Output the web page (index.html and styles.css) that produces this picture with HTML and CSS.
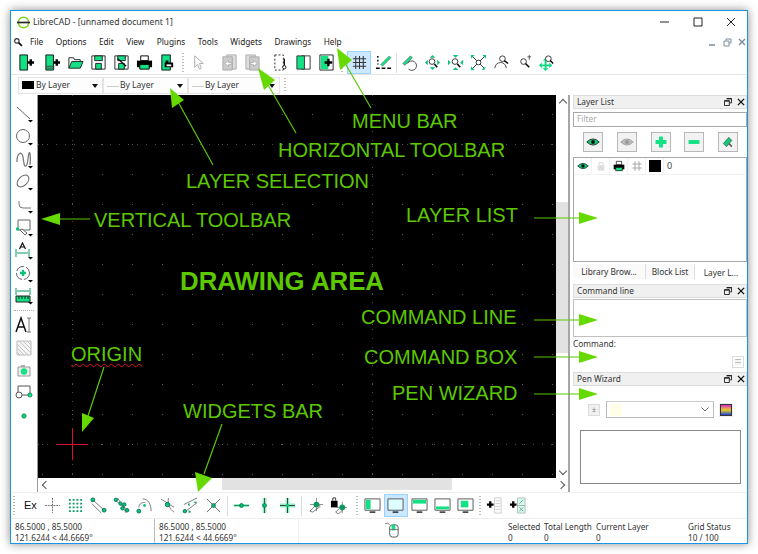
FILE: index.html
```html
<!DOCTYPE html>
<html lang="en">
<head>
  <meta charset="UTF-8" />
  <title>LibreCAD layout</title>
  <link rel="stylesheet" href="styles.css">
</head>
<body>
  <svg class="defs" width="0" height="0">
    <symbol id="i-new" viewBox="0 0 18 18"><path d="M2 1h8v16H2z" fill="#12e184" stroke="#111"/><path d="M10 9h7M13.500 5.500v7" stroke="#000" stroke-width="2.500"/></symbol>
    <symbol id="i-tpl" viewBox="0 0 18 18"><path d="M2 1h8v16H2z" fill="#12e184" stroke="#111"/><path d="M2 13h9M2 15h9" stroke="#444"/><path d="M10 9h7M13.500 5.500v7" stroke="#000" stroke-width="2.500"/></symbol>
    <symbol id="i-open" viewBox="0 0 18 18"><path d="M2 15V4h5l1 2h6v2" fill="#fff" stroke="#222"/><path d="M2 15l3-7h12l-3 7z" fill="#12e184" stroke="#222"/></symbol>
    <symbol id="i-save" viewBox="0 0 18 18"><path d="M2 2h14v14H2z" fill="#fff" stroke="#222"/><path d="M5 2h8v5H5z" fill="#12e184" stroke="#222"/><path d="M6 10h6v6H6z" fill="#12e184" stroke="#222"/></symbol>
    <symbol id="i-saveas" viewBox="0 0 18 18"><path d="M2 2h14v14H2z" fill="#fff" stroke="#222"/><path d="M5 2h8v5H5zM6 10h6v6H6z" fill="#12e184" stroke="#222"/><path d="M5 5l9 8" stroke="#111" stroke-width="1.500"/></symbol>
    <symbol id="i-print" viewBox="0 0 18 18"><path d="M5 2h8v5H5z" fill="#fff" stroke="#000"/><path d="M1 7h16v7H1z" fill="#000"/><path d="M4 11h10v5H4z" fill="#12e184" stroke="#000"/></symbol>
    <symbol id="i-preview" viewBox="0 0 18 18"><path d="M3 1h9v16H3z" fill="#12e184" stroke="#111"/><path d="M7 7h3v2h5v5H6V9h1z" fill="#000"/><path d="M8 11h5v2H8z" fill="#fff"/></symbol>
    <symbol id="i-cursor" viewBox="0 0 18 18"><path d="M5 2v12l3-3 2 5 2-1-2-5h4z" fill="#fff" stroke="#aaa"/></symbol>
    <symbol id="i-undo" viewBox="0 0 18 18"><path d="M6 1h10v15H6z" fill="#ddd" stroke="#aaa"/><path d="M2 3h10v14H2z" fill="#ccc" stroke="#aaa"/><path d="M4 10l4-3v2h3v2H8v2z" fill="#fff" stroke="#999" stroke-width=".6"/></symbol>
    <symbol id="i-redo" viewBox="0 0 18 18"><path d="M2 1h10v15H2z" fill="#ddd" stroke="#aaa"/><path d="M6 3h10v14H6z" fill="#ccc" stroke="#aaa"/><path d="M14 10l-4-3v2H7v2h3v2z" fill="#fff" stroke="#999" stroke-width=".6"/></symbol>
    <symbol id="i-cut" viewBox="0 0 18 18"><path d="M3 1h9v16H3z" fill="#fff" stroke="#222" stroke-dasharray="2 2"/><circle cx="13" cy="14" r="1.800" fill="#fff" stroke="#111"/><path d="M13 5v7" stroke="#111" stroke-width="1.500"/></symbol>
    <symbol id="i-copy" viewBox="0 0 18 18"><path d="M7 2h9v14H7z" fill="#fff" stroke="#333"/><path d="M2 2h8v14H2z" fill="#12e184" stroke="#333"/></symbol>
    <symbol id="i-paste" viewBox="0 0 18 18"><path d="M2 1h14v16H2z" fill="#fff" stroke="#222"/><path d="M3 2h8v14H3z" fill="#12e184"/><path d="M7 9h8M11 5v8" stroke="#000" stroke-width="2.500"/></symbol>
    <symbol id="i-grid" viewBox="0 0 18 18"><path d="M5 2v14M9 2v14M13 2v14M2 5h14M2 9h14M2 13h14" stroke="#333" stroke-width="1.100"/></symbol>
    <symbol id="i-draft" viewBox="0 0 18 18"><path d="M3 2v9" stroke="#000" stroke-dasharray="2 2" stroke-width="1.500"/><path d="M6 11L15 2l2 2-9 9z" fill="#12e184" stroke="#777" stroke-width=".6"/><path d="M1 15h4M7 15h4M13 15h4" stroke="#000" stroke-width="1.500"/></symbol>
    <symbol id="i-redraw" viewBox="0 0 18 18"><path d="M2 10L10 2l2 2-8 8z" fill="#12e184" stroke="#555" stroke-width=".7"/><path d="M7 10a5 5 0 1 1 1 6" fill="none" stroke="#444"/></symbol>
    <symbol id="i-zin" viewBox="0 0 18 18"><path d="M9 1l3 3H6zM9 17l-3-3h6zM1 9l3-3v6zM17 9l-3 3V6z" fill="#0cc478"/><circle cx="8.500" cy="8" r="3" fill="#fff" stroke="#333"/><path d="M11 10.500l3 3.500" stroke="#000" stroke-width="1.600"/></symbol>
    <symbol id="i-zout" viewBox="0 0 18 18"><path d="M9 4L6 1h6zM9 14l3 3H6zM4 9L1 12V6zM14 9l3-3v6z" fill="#0cc478"/><circle cx="8.500" cy="8" r="3" fill="#fff" stroke="#333"/><path d="M11 10.500l3 3.500" stroke="#000" stroke-width="1.600"/></symbol>
    <symbol id="i-zauto" viewBox="0 0 18 18"><path d="M1 1h4L1 5zM17 1v4l-4-4zM1 17v-4l4 4z" fill="#0cc478"/><path d="M15 17h-3l5-4z" fill="#0cc478"/><path d="M3 3l12 12M15 3L3 15" stroke="#333"/><circle cx="9" cy="9" r="2.500" fill="#fff" stroke="#333"/></symbol>
    <symbol id="i-zprev" viewBox="0 0 18 18"><path d="M2 15a6 6 0 0 1 12 0" fill="none" stroke="#444"/><circle cx="10" cy="5" r="3" fill="#fff" stroke="#333"/><path d="M12 7l4 3" stroke="#000" stroke-width="1.500"/></symbol>
    <symbol id="i-zwin" viewBox="0 0 18 18"><circle cx="8" cy="8" r="3" fill="#fff" stroke="#333"/><path d="M10 10l4 4" stroke="#000" stroke-width="1.600"/><path d="M14 1v5M12 3h4" stroke="#555"/></symbol>
    <symbol id="i-zpan" viewBox="0 0 18 18"><path d="M1 12l3-3v2h3V7H5l3-3 3 3H9v4h3V9l3 3-3 3v-2H9v2h2l-3 3-3-3h2v-2H4v2z" fill="#0cd880"/><circle cx="11" cy="5" r="3" fill="#fff" stroke="#333"/><path d="M13 7l3 3" stroke="#000" stroke-width="1.500"/></symbol>
    <symbol id="i-line" viewBox="0 0 18 18"><path d="M2 2l13 12" stroke="#666"/><path d="M13 15h5l-2.500 2.500z" fill="#000"/></symbol>
    <symbol id="i-circle" viewBox="0 0 18 18"><circle cx="8" cy="8" r="6.500" fill="#fff" stroke="#666"/><path d="M13 15h5l-2.500 2.500z" fill="#000"/></symbol>
    <symbol id="i-spline" viewBox="0 0 18 18"><path d="M2 11C2 1 7 0 8 6s1 10 3 9 2-11 3-13 2 5 1 12" fill="none" stroke="#777" stroke-width="1.300"/><path d="M13 15h5l-2.500 2.500z" fill="#000"/></symbol>
    <symbol id="i-ellipse" viewBox="0 0 18 18"><ellipse cx="8" cy="8" rx="7" ry="4.500" fill="#fff" stroke="#666" transform="rotate(-45 8 8)"/><path d="M13 15h5l-2.500 2.500z" fill="#000"/></symbol>
    <symbol id="i-polyline" viewBox="0 0 18 18"><path d="M4 5v3q0 4 4 4h8" fill="none" stroke="#777"/><path d="M13 15h5l-2.500 2.500z" fill="#000"/></symbol>
    <symbol id="i-select" viewBox="0 0 18 18"><path d="M3 1h12v10H3z" fill="#fff" stroke="#666"/><circle cx="2.500" cy="10" r="1.700" fill="#0cc478"/><path d="M5 11l5 5 2-2-5-4z" fill="#fff" stroke="#666"/><path d="M13 15h5l-2.500 2.500z" fill="#000"/></symbol>
    <symbol id="i-dim" viewBox="0 0 18 18"><path d="M1 7v8M14 7v8M2 11h11" stroke="#0a9a60"/><path d="M4.500 7L7.500 1l3 6M5.500 5h4" fill="none" stroke="#111" stroke-width="1.200"/><path d="M13 15h5l-2.500 2.500z" fill="#000"/></symbol>
    <symbol id="i-modify" viewBox="0 0 18 18"><circle cx="8" cy="8" r="6.500" fill="#fff" stroke="#666" stroke-dasharray="9 2"/><path d="M5 8h6M8 5v6" stroke="#0cc478" stroke-width="2.400"/><path d="M13 15h5l-2.500 2.500z" fill="#000"/></symbol>
    <symbol id="i-measure" viewBox="0 0 18 18"><path d="M1 1v7M15 1v7M2 4h12" stroke="#0a9a60"/><path d="M1 9h14v6H1z" fill="#12e184" stroke="#222"/><path d="M4 9v3M7 9v3M10 9v3M13 9v3" stroke="#222"/><path d="M13 15h5l-2.500 2.500z" fill="#000"/></symbol>
    <symbol id="i-text" viewBox="0 0 18 18"><path d="M1 16L6 2l5 14M3 11h6" fill="none" stroke="#111" stroke-width="1.500"/><path d="M14 2v14M12 2h4M12 16h4" stroke="#777"/></symbol>
    <symbol id="i-hatch" viewBox="0 0 18 18"><path d="M2 2h14v14H2z" fill="#f4f4f4" stroke="#bbb"/><path d="M2 6l4-4M2 10l8-8M2 14l12-12M5 16L16 5M9 16l7-7M13 16l3-3" transform="matrix(-1 0 0 1 18 0)" stroke="#c4c4c4"/></symbol>
    <symbol id="i-image" viewBox="0 0 18 18"><path d="M3 5h12v9H3z" fill="#eee" stroke="#999"/><path d="M6 3h4v2H6z" fill="#aaa"/><circle cx="9" cy="9.500" r="3.200" fill="#12e184"/></symbol>
    <symbol id="i-block" viewBox="0 0 18 18"><path d="M3 2h12v9" fill="none" stroke="#555"/><path d="M3 2v6M6 11h10" stroke="#555"/><circle cx="4" cy="11" r="3" fill="#fff" stroke="#555"/><circle cx="15" cy="11" r="2" fill="#12e184" stroke="#0a9a60"/></symbol>
    <symbol id="i-point" viewBox="0 0 18 18"><circle cx="9" cy="9" r="2.200" fill="#12c878" stroke="#0a8a55" stroke-width=".7"/></symbol>
    <symbol id="i-snapfree" viewBox="0 0 18 18"><path d="M9 1v16M1 9h16" stroke="#666" stroke-dasharray="2 1"/></symbol>
    <symbol id="i-snapgrid" viewBox="0 0 18 18"><path fill="#0a9a60" d="M2 2h2v2H2zM6 2h2v2H6zM10 2h2v2h-2zM14 2h2v2h-2zM2 6h2v2H2zM6 6h2v2H6zM10 6h2v2h-2zM14 6h2v2h-2zM2 10h2v2H2zM6 10h2v2H6zM10 10h2v2h-2zM14 10h2v2h-2zM2 14h2v2H2zM6 14h2v2H6zM10 14h2v2h-2zM14 14h2v2h-2z"/></symbol>
    <symbol id="i-snapend" viewBox="0 0 18 18"><path d="M3 3l12 11M2 7l10 10" stroke="#777" fill="none"/><circle cx="3" cy="3" r="2" fill="#0cc478" stroke="#075"/><circle cx="15" cy="14" r="2" fill="#0cc478" stroke="#075"/></symbol>
    <symbol id="i-snapon" viewBox="0 0 18 18"><path d="M2 3l14 11M5 1l9 16" stroke="#777"/><circle cx="3" cy="3" r="1.800" fill="#0cc478" stroke="#075"/><circle cx="8" cy="7" r="1.800" fill="#0cc478" stroke="#075"/><circle cx="12" cy="8" r="1.800" fill="#0cc478" stroke="#075"/><circle cx="10" cy="12" r="1.800" fill="#0cc478" stroke="#075"/><circle cx="15" cy="14" r="1.800" fill="#0cc478" stroke="#075"/></symbol>
    <symbol id="i-snapcenter" viewBox="0 0 18 18"><path d="M7 2c6 0 9 6 9 13M3 11c0-4 4-6 7-5" fill="none" stroke="#777"/><circle cx="3" cy="15" r="2" fill="#0cc478" stroke="#075"/><circle cx="9" cy="9" r="1.500" fill="#0cc478"/></symbol>
    <symbol id="i-snapmid" viewBox="0 0 18 18"><path d="M2 2l14 9M10 1c-1 6 1 12 6 15" fill="none" stroke="#777"/><circle cx="9" cy="8" r="2.300" fill="#0cc478" stroke="#075"/></symbol>
    <symbol id="i-snapdist" viewBox="0 0 18 18"><path d="M2 8L16 1M4 15L16 6" stroke="#777"/><path d="M8 6l-2 2 2 2zM12 5l2 2 2-2z" fill="#0a9a60"/><circle cx="3" cy="15" r="1.800" fill="#0cc478" stroke="#075"/><path d="M7 14l3 2-3 1z" fill="#0a9a60"/></symbol>
    <symbol id="i-snapx" viewBox="0 0 18 18"><path d="M2 2l14 14M16 2L2 16" stroke="#666"/><circle cx="9" cy="9" r="2" fill="#0cc478" stroke="#075"/></symbol>
    <symbol id="i-resth" viewBox="0 0 18 18"><path d="M1 9h16" stroke="#333"/><path d="M1 9h16" stroke="#12e184" stroke-width="3" opacity=".5"/><circle cx="9" cy="9" r="2" fill="#0cc478" stroke="#075"/></symbol>
    <symbol id="i-restv" viewBox="0 0 18 18"><path d="M7 1h4v16H7z" fill="#8ef0c4"/><path d="M9 1v16" stroke="#444"/><circle cx="9" cy="9" r="2" fill="#0cc478" stroke="#075"/></symbol>
    <symbol id="i-restb" viewBox="0 0 18 18"><path d="M7 1h4v16H7zM1 7h16v4H1z" fill="#8ef0c4"/><path d="M9 1v16M1 9h16" stroke="#333"/><circle cx="9" cy="9" r="1.800" fill="#0cc478"/></symbol>
    <symbol id="i-relzero" viewBox="0 0 18 18"><path d="M3 15l8-8 3 3-8 6z" fill="#fff" stroke="#777"/><path d="M10 1v14M3 8h14" stroke="#555" stroke-width=".7"/><circle cx="10" cy="8" r="3" fill="#0a9a60"/></symbol>
    <symbol id="i-rellock" viewBox="0 0 18 18"><path d="M1 4h7v7H1z" fill="#000"/><path d="M3 4V1h3v3" fill="none" stroke="#333"/><path d="M6 16l6-6 3 2-6 6z" fill="#fff" stroke="#777"/><path d="M13 5v12M7 11h11" stroke="#555" stroke-width=".7"/><circle cx="13" cy="11" r="3" fill="#0a9a60"/></symbol>
    <symbol id="i-mon1" viewBox="0 0 18 18"><path d="M1 2h16v12H1z" fill="#fff" stroke="#555"/><path d="M2 3h5v10H2z" fill="#12e184"/><path d="M6 16h6" stroke="#222" stroke-width="1.500"/></symbol>
    <symbol id="i-mon2" viewBox="0 0 18 18"><path d="M1 2h16v12H1z" fill="#dff" stroke="#555"/><path d="M6 16h6" stroke="#222" stroke-width="1.500"/></symbol>
    <symbol id="i-mon3" viewBox="0 0 18 18"><path d="M1 2h16v12H1z" fill="#fff" stroke="#555"/><path d="M2 3h14v4H2z" fill="#12e184"/><path d="M6 16h6" stroke="#222" stroke-width="1.500"/></symbol>
    <symbol id="i-mon4" viewBox="0 0 18 18"><path d="M1 2h16v12H1z" fill="#fff" stroke="#555"/><path d="M2 10h14v3H2z" fill="#12e184"/><path d="M6 16h6" stroke="#222" stroke-width="1.500"/></symbol>
    <symbol id="i-mon5" viewBox="0 0 18 18"><path d="M1 2h16v12H1z" fill="#fff" stroke="#555"/><path d="M4 4h8v7H4z" fill="#12e184"/><path d="M6 16h6" stroke="#222" stroke-width="1.500"/></symbol>
    <symbol id="i-addlist" viewBox="0 0 18 18"><path d="M1 8h7M4.500 4.500v7" stroke="#000" stroke-width="2.500"/><path d="M9 1h7v16H9z" fill="#fff" stroke="#ccc"/><path d="M10 4h5M10 7h5M10 10h5M10 13h5" stroke="#ccc"/></symbol>
    <symbol id="i-addgrid" viewBox="0 0 18 18"><path d="M1 8h7M4.500 4.500v7" stroke="#000" stroke-width="2.500"/><path d="M9 1h8v16H9z" fill="#cfe" stroke="#bbb"/><path d="M9 9h8" stroke="#aaa"/><path d="M11 7l4-4M11 11l4 4M15 11l-4 4" stroke="#999"/></symbol>
    <symbol id="i-eye" viewBox="0 0 18 18"><path d="M1 9q8-8 16 0-8 8-16 0z" fill="#12c878" stroke="#111"/><circle cx="9" cy="9" r="2.500" fill="#111"/></symbol>
    <symbol id="i-eyeoff" viewBox="0 0 18 18"><path d="M1 9q8-8 16 0-8 8-16 0z" fill="#bbb" stroke="#999"/><circle cx="9" cy="9" r="2.500" fill="#999"/></symbol>
    <symbol id="i-plus" viewBox="0 0 18 18"><path d="M2 9h14M9 2v14" stroke="#12e184" stroke-width="5"/></symbol>
    <symbol id="i-minus" viewBox="0 0 18 18"><path d="M2 9h14" stroke="#12e184" stroke-width="5"/></symbol>
    <symbol id="i-edit" viewBox="0 0 18 18"><path d="M3 11l7-8 4 4-7 8z" fill="#12c878" stroke="#333" stroke-width=".7"/><path d="M10 11l4 4" stroke="#555" stroke-width="2"/></symbol>
    <symbol id="i-lock" viewBox="0 0 18 18"><path d="M4 8h10v8H4z" fill="#ddd"/><path d="M6 8V4h6v4" fill="none" stroke="#ddd" stroke-width="1.500"/></symbol>
    <symbol id="i-hash" viewBox="0 0 18 18"><path d="M6 2v14M12 2v14M2 6h14M2 12h14" stroke="#aaa" stroke-width="1.600"/></symbol>
    <symbol id="i-float" viewBox="0 0 9 9"><path d="M3 .5h5.500v5H6.500M.5 3h5.500v5.500H.5z" fill="none" stroke="#111"/><path d="M.5 3.500h5.500M3 1h5.500" stroke="#111"/></symbol>
    <symbol id="i-close" viewBox="0 0 9 9"><path d="M1 1l7 7M8 1L1 8" stroke="#111" stroke-width="1.500"/></symbol>
    <symbol id="i-mouse" viewBox="0 0 18 18"><rect x="6" y="4" width="9" height="13" rx="3" fill="#fff" stroke="#555"/><path d="M8 4h4v6H8z" fill="#12e184"/><path d="M6 9h9M1 3q3-2 5 1" fill="none" stroke="#777"/></symbol>
  </svg>

  <div class="window">
    <header class="titlebar">
      <svg class="logo" viewBox="0 0 14 14"><circle cx="7" cy="7" r="5.600" fill="none" stroke="#7ed321" stroke-width="1.600"/><path d="M0 7h14" stroke="#222" stroke-width="1.800"/></svg>
      <span class="title">LibreCAD - [unnamed document 1]</span>
      <div class="winbtns">
        <svg viewBox="0 0 10 10"><path d="M0 5h9" stroke="#222"/></svg>
        <svg viewBox="0 0 10 10"><path d="M1 1h8v8H1z" fill="none" stroke="#222"/></svg>
        <svg viewBox="0 0 10 10"><path d="M1 1l8 8M9 1L1 9" stroke="#222"/></svg>
      </div>
    </header>

    <nav class="menubar">
      <svg class="menu-ico" viewBox="0 0 9 9"><circle cx="3.500" cy="3.500" r="2" fill="none" stroke="#333"/><path d="M5 5l3 3" stroke="#111" stroke-width="1.600"/></svg>
      <span class="menu">File</span><span class="menu">Options</span><span class="menu">Edit</span><span class="menu">View</span><span class="menu">Plugins</span><span class="menu">Tools</span><span class="menu">Widgets</span><span class="menu">Drawings</span><span class="menu">Help</span>
      <div class="mdi-btns">
        <svg viewBox="0 0 9 9"><path d="M1 7h6" stroke="#7a8a9a" stroke-width="1.500"/></svg>
        <svg viewBox="0 0 9 9"><path d="M3 2.500V1h5v4H6.500M1 3h5v5H1z" fill="none" stroke="#7a8a9a"/></svg>
        <svg viewBox="0 0 9 9"><path d="M1 1l6 6M7 1L1 7" stroke="#7a8a9a" stroke-width="1.400"/></svg>
      </div>
    </nav>

    <div class="toolbar top">
      <svg class="ic"><use href="#i-new"/></svg>
      <svg class="ic wide"><use href="#i-tpl"/></svg>
      <svg class="ic"><use href="#i-open"/></svg>
      <svg class="ic"><use href="#i-save"/></svg>
      <svg class="ic"><use href="#i-saveas"/></svg>
      <svg class="ic"><use href="#i-print"/></svg>
      <svg class="ic"><use href="#i-preview"/></svg>
      <i class="handle"></i>
      <svg class="ic"><use href="#i-cursor"/></svg>
      <svg class="ic gap-l"><use href="#i-undo"/></svg>
      <svg class="ic"><use href="#i-redo"/></svg>
      <svg class="ic gap-s"><use href="#i-cut"/></svg>
      <svg class="ic"><use href="#i-copy"/></svg>
      <svg class="ic"><use href="#i-paste"/></svg>
      <i class="handle"></i>
      <span class="active"><svg class="ic"><use href="#i-grid"/></svg></span>
      <svg class="ic"><use href="#i-draft"/></svg>
      <i class="sep"></i>
      <svg class="ic"><use href="#i-redraw"/></svg>
      <svg class="ic"><use href="#i-zin"/></svg>
      <svg class="ic"><use href="#i-zout"/></svg>
      <svg class="ic"><use href="#i-zauto"/></svg>
      <svg class="ic"><use href="#i-zprev"/></svg>
      <svg class="ic"><use href="#i-zwin"/></svg>
      <svg class="ic tight"><use href="#i-zpan"/></svg>
    </div>

    <div class="toolbar pens">
      <div class="pen"><b class="swatch"></b>By Layer<em></em></div>
      <div class="pen lined">By Layer<em></em></div>
      <div class="pen lined last">By Layer<em></em></div>
      <i class="handle short"></i>
    </div>

    <main class="workspace">
      <aside class="sidebar">
        <svg class="ic"><use href="#i-line"/></svg>
        <svg class="ic"><use href="#i-circle"/></svg>
        <svg class="ic"><use href="#i-spline"/></svg>
        <svg class="ic"><use href="#i-ellipse"/></svg>
        <svg class="ic"><use href="#i-polyline"/></svg>
        <svg class="ic"><use href="#i-select"/></svg>
        <svg class="ic"><use href="#i-dim"/></svg>
        <svg class="ic"><use href="#i-modify"/></svg>
        <svg class="ic"><use href="#i-measure"/></svg>
        <i class="rule"></i>
        <svg class="ic"><use href="#i-text"/></svg>
        <svg class="ic"><use href="#i-hatch"/></svg>
        <svg class="ic"><use href="#i-image"/></svg>
        <svg class="ic"><use href="#i-block"/></svg>
        <svg class="ic"><use href="#i-point"/></svg>
      </aside>

      <section class="drawing">
        <div class="canvas-row">
          <svg class="canvas" width="518" height="383">
            <defs>
              <pattern id="dots" x="4" y="19" width="30" height="30" patternUnits="userSpaceOnUse"><rect width="1" height="1" fill="#5a5a5a"/></pattern>
            </defs>
            <rect width="518" height="383" fill="#000"/>
            <rect width="518" height="383" fill="url(#dots)"/>
            <path d="M34.500 0V383M334.500 0V383M0 49.500H518M0 349.500H518" stroke="#4a4a4a" stroke-dasharray="1 8"/>
            <path d="M19 349.500H50M34.500 334V365" stroke="#e0102a"/>
          </svg>
          <div class="vscroll"><span class="arrow up"></span><span class="thumb-v"></span><span class="arrow down"></span></div>
        </div>
        <div class="hscroll"><span class="arrow left"></span><span class="thumb-h"></span><span class="arrow right"></span></div>
      </section>

      <aside class="docks">
        <div class="dock-title">Layer List<span class="dock-btns"><svg><use href="#i-float"/></svg><svg><use href="#i-close"/></svg></span></div>
        <div class="filter">Filter</div>
        <div class="layer-btns">
          <span class="lbtn"><svg><use href="#i-eye"/></svg></span>
          <span class="lbtn"><svg><use href="#i-eyeoff"/></svg></span>
          <span class="lbtn"><svg><use href="#i-plus"/></svg></span>
          <span class="lbtn"><svg><use href="#i-minus"/></svg></span>
          <span class="lbtn"><svg><use href="#i-edit"/></svg></span>
        </div>
        <div class="layer-table">
          <div class="layer-row">
            <span class="cell"><svg><use href="#i-eye"/></svg></span>
            <span class="cell"><svg><use href="#i-lock"/></svg></span>
            <span class="cell"><svg><use href="#i-print"/></svg></span>
            <span class="cell"><svg><use href="#i-hash"/></svg></span>
            <span class="cell"><b class="swatch big"></b></span>
            <span class="layer-name">0</span>
          </div>
        </div>
        <div class="tabs">
          <span class="tab t-lib">Library Brow...</span>
          <span class="tab t-block">Block List</span>
          <span class="tab current">Layer L...</span>
        </div>

        <div class="dock-title">Command line<span class="dock-btns"><svg><use href="#i-float"/></svg><svg><use href="#i-close"/></svg></span></div>
        <div class="cmd-box"></div>
        <div class="cmd-label">Command:</div>
        <div class="cmd-btn-row"><span class="cmd-btn"></span></div>

        <div class="dock-title">Pen Wizard<span class="dock-btns"><svg><use href="#i-float"/></svg><svg><use href="#i-close"/></svg></span></div>
        <div class="pen-row">
          <span class="mini-btn">±</span>
          <span class="color-combo"><b></b><svg viewBox="0 0 8 5"><path d="M.5.500L4 4 7.500.500" fill="none" stroke="#666"/></svg></span>
          <span class="spectrum"></span>
        </div>
        <div class="pen-area"></div>
      </aside>
    </main>

    <div class="toolbar widgets">
      <i class="handle first"></i>
      <span class="ex">Ex</span>
      <svg class="ic"><use href="#i-snapfree"/></svg>
      <svg class="ic"><use href="#i-snapgrid"/></svg>
      <svg class="ic"><use href="#i-snapend"/></svg>
      <svg class="ic"><use href="#i-snapon"/></svg>
      <svg class="ic"><use href="#i-snapcenter"/></svg>
      <svg class="ic"><use href="#i-snapmid"/></svg>
      <svg class="ic"><use href="#i-snapdist"/></svg>
      <svg class="ic"><use href="#i-snapx"/></svg>
      <i class="sep"></i>
      <svg class="ic"><use href="#i-resth"/></svg>
      <svg class="ic"><use href="#i-restv"/></svg>
      <svg class="ic"><use href="#i-restb"/></svg>
      <i class="sep"></i>
      <svg class="ic"><use href="#i-relzero"/></svg>
      <svg class="ic"><use href="#i-rellock"/></svg>
      <i class="handle"></i>
      <svg class="ic"><use href="#i-mon1"/></svg>
      <span class="active"><svg class="ic"><use href="#i-mon2"/></svg></span>
      <svg class="ic"><use href="#i-mon3"/></svg>
      <svg class="ic"><use href="#i-mon4"/></svg>
      <svg class="ic"><use href="#i-mon5"/></svg>
      <i class="handle last"></i>
      <svg class="ic"><use href="#i-addlist"/></svg>
      <svg class="ic"><use href="#i-addgrid"/></svg>
    </div>

    <footer class="statusbar">
      <div class="st st-coord"><span>86.5000 , 85.5000</span><span>121.6244 &lt; 44.6669°</span></div>
      <div class="st st-coord2"><span>86.5000 , 85.5000</span><span>121.6244 &lt; 44.6669°</span></div>
      <div class="st st-mouse"><svg class="ic"><use href="#i-mouse"/></svg></div>
      <div class="st st-sel"><span>Selected</span><span>0</span></div>
      <div class="st st-len"><span>Total Length</span><span>0</span></div>
      <div class="st st-layer"><span>Current Layer</span><span>0</span></div>
      <div class="st st-grid"><span>Grid Status</span><span>10 / 100</span></div>
    </footer>
  </div>

  <!-- annotations drawn over the screenshot -->
  <svg class="arrows" width="758" height="554">
    <g stroke="#5cc800" stroke-width="1.200">
      <path d="M371 108L342 58M296 133L264 78M213 165L177 100M90 219H55M534 218H580M534 320H580M534 357H580M534 394H580M104 367L88 416M222 424L204 474"/>
    </g>
    <g fill="#66d900">
      <path d="M337 48L352 60 340 70z"/>
      <path d="M258 68L275 80 264 90z"/>
      <path d="M170 88L184 100 172 108z"/>
      <path d="M41 219L60 213V225z"/>
      <path d="M598 218L579 212V224z"/>
      <path d="M598 320L579 314V326z"/>
      <path d="M598 357L579 351V363z"/>
      <path d="M598 394L579 388V400z"/>
      <path d="M82 432V413L94 418z"/>
      <path d="M198 492L195 472 212 478z"/>
    </g>
  </svg>
  <span class="note l-menu">MENU BAR</span>
  <span class="note l-horiz">HORIZONTAL TOOLBAR</span>
  <span class="note l-layer">LAYER SELECTION</span>
  <span class="note l-vert">VERTICAL TOOLBAR</span>
  <span class="note l-list">LAYER LIST</span>
  <span class="note l-draw">DRAWING AREA</span>
  <span class="note l-cmdline">COMMAND LINE</span>
  <span class="note l-cmdbox">COMMAND BOX</span>
  <span class="note l-pen">PEN WIZARD</span>
  <span class="note l-origin">ORIGIN</span>
  <span class="note l-widgets">WIDGETS BAR</span>
</body>
</html>
```

FILE: styles.css
```css
* {
  box-sizing: border-box;
}

html, body {
  height: 100%;
}

body {
  margin: 0;
  padding: 10px;
  background: #fff;
  color: #222;
  font-family: "Noto Sans", "Open Sans", sans-serif;
  font-size: 8.500px;
  line-height: 1.2;
  position: relative;
  overflow: hidden;
}

.defs {
  position: absolute;
}

.window {
  width: 738px;
  height: 534px;
  background: #fff;
  border: 1px solid #1a94e6;
  box-shadow: 0 0 9px rgba(0,0,0,0.45);
  display: flex;
  flex-direction: column;
}

/* title + menu */

.titlebar {
  height: 22px;
  flex: none;
  display: flex;
  align-items: center;
  padding-left: 6px;
}

.logo {
  width: 13px;
  height: 13px;
}

.title {
  margin-left: 3px;
  font-size: 8.600px;
  color: #333;
}

.winbtns {
  margin-left: auto;
  display: flex;
  gap: 23px;
  padding-right: 11px;
}

.winbtns svg {
  width: 10px;
  height: 10px;
}

.menubar {
  height: 18px;
  flex: none;
  display: flex;
  align-items: center;
  gap: 12.400px;
  padding-left: 1px;
  font-size: 8.300px;
}

.menu-ico {
  width: 10px;
  height: 10px;
  margin: 0 -5.400px 0 1px;
}

.menu {
  color: #222;
}

.mdi-btns {
  margin-left: auto;
  display: flex;
  gap: 6px;
}

.mdi-btns svg {
  width: 9px;
  height: 9px;
}

/* toolbars */

.toolbar {
  display: flex;
  align-items: center;
  flex: none;
}

.ic {
  width: 17px;
  height: 17px;
  flex: none;
}

.top {
  height: 24px;
  gap: 6px;
  padding-left: 7px;
  border-bottom: 1px solid #e6e6e6;
}

.top .wide { margin-left: 3px; }
.top .gap-l { margin-left: 8px; }
.top .gap-s { margin-left: 5px; }
.top .tight { margin-left: -1px; }
.top .handle { margin: 0; }
.top .sep { margin: 0 -2px; }
.top .active { margin: 0 -2px; }

.handle {
  width: 2px;
  height: 20px;
  flex: none;
  margin: 0 0 0 3px;
  background: repeating-linear-gradient(to bottom, #bbb 0 1px, transparent 1px 3px);
}

.sep {
  width: 1px;
  height: 20px;
  flex: none;
  background: #ddd;
  margin: 0 -1px;
}

.active {
  width: 24px;
  height: 23px;
  flex: none;
  margin: 0 -3px;
  background: #cce8ff;
  border: 1px solid #99d1ff;
  display: flex;
  align-items: center;
  justify-content: center;
}

.pens {
  height: 20px;
  padding-left: 7px;
}

.pen {
  width: 85px;
  height: 17px;
  border: 1px solid #e4e4e4;
  background: #fdfdfd;
  display: flex;
  align-items: center;
  padding-left: 3px;
  position: relative;
  font-size: 8.500px;
  color: #333;
}

.pen.last {
  width: 92px;
}

.pen em {
  position: absolute;
  right: 4px;
  top: 6px;
  border: 3px solid transparent;
  border-top: 4px solid #111;
  border-bottom: 0;
}

.pen.lined {
  padding-left: 16px;
}

.pen.lined::before {
  content: "";
  position: absolute;
  left: 3px;
  width: 12px;
  top: 8px;
  border-top: 1px solid #ccc;
}

.swatch {
  display: block;
  width: 12px;
  height: 8px;
  background: #000;
  margin-right: 2px;
}

.swatch.big {
  width: 12px;
  height: 12px;
  margin: 0;
}

.handle.short {
  height: 14px;
  margin-left: 4px;
}

/* middle */

.workspace {
  flex: none;
  height: 397px;
  display: flex;
}

.sidebar {
  width: 27px;
  flex: none;
  display: flex;
  flex-direction: column;
  align-items: center;
  gap: 4.800px;
  padding-top: 10px;
  border-right: 1px solid #999;
}

.sidebar .ic {
  width: 18px;
  height: 18px;
}

.rule {
  width: 20px;
  height: 1px;
  flex: none;
  border-top: 1px dotted #aaa;
}

.drawing {
  width: 532px;
  flex: none;
  display: flex;
  flex-direction: column;
  border-right: 2px solid #a6a6a6;
}

.canvas-row {
  display: flex;
  height: 383px;
}

.canvas {
  display: block;
  flex: none;
}

.vscroll {
  width: 12px;
  display: flex;
  flex-direction: column;
  background: #fff;
}

.thumb-v {
  display: block;
  height: 151px;
  margin-top: 95px;
  background: #e2e2e2;
}

.arrow {
  flex: none;
  display: block;
  position: relative;
  width: 12px;
  height: 12px;
}

.arrow::before {
  content: "";
  position: absolute;
  left: 3.500px;
  top: 4px;
  width: 5px;
  height: 5px;
  border-top: 1.200px solid #555;
  border-left: 1.200px solid #555;
}

.arrow.up::before { transform: rotate(45deg); top: 5px; }
.arrow.down { margin-top: auto; }
.arrow.down::before { transform: rotate(225deg); top: 2px; }
.arrow.left::before { transform: rotate(-45deg); left: 5px; }
.arrow.right { margin-left: auto; }
.arrow.right::before { transform: rotate(135deg); left: 2px; }

.hscroll {
  height: 13px;
  display: flex;
  background: #fff;
}

.thumb-h {
  display: block;
  width: 230px;
  height: 12px;
  margin-left: 172px;
  background: #e2e2e2;
}

/* docks */

.docks {
  flex: 1;
  min-width: 0;
  padding-left: 3px;
  display: flex;
  flex-direction: column;
  font-size: 8.300px;
}

.dock-title {
  height: 14px;
  flex: none;
  background: #f0f0f0;
  border: 1px solid #ddd;
  padding-left: 3px;
  display: flex;
  align-items: center;
  color: #333;
}

.dock-btns {
  margin-left: auto;
  display: flex;
  gap: 5px;
  padding-right: 1px;
}

.dock-btns svg {
  width: 8px;
  height: 8px;
}

.filter {
  height: 15px;
  flex: none;
  margin-top: 3px;
  border: 1px solid #aaa;
  padding: 1px 3px;
  color: #aaa;
}

.layer-btns {
  flex: none;
  display: flex;
  justify-content: space-between;
  padding: 5px 9px 0 10px;
}

.lbtn {
  width: 20px;
  height: 20px;
  background: #f2f2f2;
  border: 1px solid #b8b8b8;
  display: flex;
  align-items: center;
  justify-content: center;
}

.lbtn svg {
  width: 14px;
  height: 14px;
}

.layer-table {
  height: 105px;
  flex: none;
  margin-top: 5px;
  border: 1px solid #a8a8a8;
}

.layer-row {
  height: 17px;
  display: flex;
  align-items: center;
  border-bottom: 1px solid #f2f2f2;
  font-size: 9px;
}

.cell {
  width: 18px;
  height: 16px;
  display: flex;
  align-items: center;
  justify-content: center;
  border-right: 1px solid #f2f2f2;
}

.cell svg {
  width: 12px;
  height: 12px;
}

.layer-name {
  margin-left: 3px;
  color: #444;
}

.tabs {
  height: 15px;
  flex: none;
  margin-top: 2px;
  display: flex;
  align-items: center;
  background: #f0f0f0;
  color: #333;
}

.tab {
  height: 100%;
  display: flex;
  align-items: center;
  justify-content: center;
  border-right: 1px solid #ddd;
  white-space: nowrap;
}

.t-lib { width: 73px; background: #fafafa; }
.t-block { width: 49px; background: #fafafa; }
.tab.current { flex: 1; background: #fff; border: 0; padding-top: 2px; }

.tabs + .dock-title {
  margin-top: 5px;
}

.cmd-box {
  height: 38px;
  flex: none;
  margin-top: 1px;
  border: 1px solid #c0c0c0;
}

.cmd-label {
  flex: none;
  height: 14px;
  padding-top: 2px;
  color: #333;
}

.cmd-btn-row {
  height: 21px;
  flex: none;
  display: flex;
  justify-content: flex-end;
  align-items: center;
  padding-right: 3px;
}

.cmd-btn {
  width: 12px;
  height: 12px;
  border: 1px solid #ddd;
  background: repeating-linear-gradient(to bottom, #f4f4f4 0 2px, #bbb 2px 3px);
  background-clip: content-box;
  padding: 2px;
}

.pen-row {
  height: 17px;
  flex: none;
  margin-top: 15px;
  display: flex;
  align-items: center;
  padding-left: 15px;
}

.mini-btn {
  width: 12px;
  height: 12px;
  border: 1px solid #ddd;
  background: #f0f0f0;
  color: #777;
  font-size: 7px;
  text-align: center;
  line-height: 10px;
}

.color-combo {
  width: 108px;
  height: 17px;
  margin-left: 6px;
  border: 1px solid #bbb;
  border-top-color: #ccc;
  display: flex;
  align-items: center;
  justify-content: space-between;
  padding: 0 3px;
}

.color-combo b {
  display: block;
  width: 12px;
  height: 12px;
  background: #ffffe8;
}

.color-combo svg {
  width: 8px;
  height: 5px;
  margin-right: 1px;
}

.spectrum {
  width: 12px;
  height: 12px;
  margin-left: 6px;
  border: 1px solid #333;
  box-shadow: 0 0 0 1px #eee;
  background: linear-gradient(to bottom, #e02bd0, #e6d020 50%, #2040e0);
}

.pen-area {
  height: 54px;
  flex: none;
  margin: 12px 6px 0 7px;
  border: 1px solid #888;
}

/* bottom */

.widgets {
  height: 26px;
  gap: 6px;
  border-top: 1px solid #eee;
}

.widgets .first {
  margin-left: 2px;
  margin-right: 3px;
}

.widgets .last {
  margin: 0 -1px;
}

.widgets .ex {
  width: 12px;
  font-family: "Liberation Sans", sans-serif;
  font-size: 11px;
  color: #111;
  margin-right: 1.500px;
}

.statusbar {
  flex: none;
  height: 25px;
  display: flex;
  font-size: 8.200px;
  color: #333;
  border-top: 1px solid #eee;
}

.st {
  display: flex;
  flex-direction: column;
  flex: none;
  gap: 1px;
  padding-top: 3px;
}

.st-coord { width: 143px; padding-left: 4px; }
.st-coord2 { width: 144px; padding-left: 4px; border-left: 1px solid #bbb; }
.st-mouse { width: 210px; padding-left: 85px; border-left: 1px solid #f2f2f2; padding-top: 2px; }
.st-sel { width: 36px; }
.st-len { width: 52px; }
.st-layer { width: 92px; }
.st-grid { width: 50px; }

/* annotations */

.arrows {
  position: absolute;
  left: 0;
  top: 0;
  pointer-events: none;
}

.note {
  position: absolute;
  color: #5cc800;
  font-family: "Liberation Sans", sans-serif;
  font-size: 20px;
  line-height: 22px;
  white-space: nowrap;
}

.l-menu { left: 352px; top: 110px; }
.l-horiz { left: 278px; top: 139px; }
.l-layer { left: 186px; top: 170px; }
.l-vert { left: 94px; top: 209px; }
.l-list { left: 406px; top: 204px; }
.l-draw { left: 180px; top: 267px; font-size: 25.800px; line-height: 28px; font-weight: bold; }
.l-cmdline { left: 361px; top: 306px; }
.l-cmdbox { left: 364px; top: 346px; }
.l-pen { left: 392px; top: 382px; }
.l-origin { left: 71px; top: 343px; text-decoration: underline wavy #e0102a 1px; text-underline-offset: 2px; }
.l-widgets { left: 183px; top: 400px; }
```
